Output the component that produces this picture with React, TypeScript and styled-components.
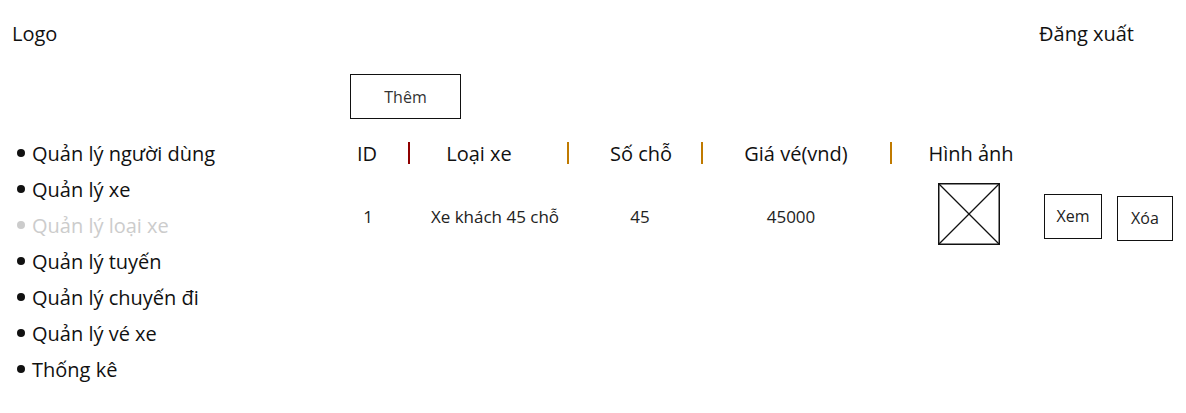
import styled, { createGlobalStyle } from 'styled-components';

const GlobalStyle = createGlobalStyle`
  body {
    margin: 0;
    background: #ffffff;
    font-family: 'Open Sans', 'Noto Sans', sans-serif;
    color: #111111;
  }
`;

const menuItems = [
  { label: 'Quản lý người dùng' },
  { label: 'Quản lý xe' },
  { label: 'Quản lý loại xe', muted: true },
  { label: 'Quản lý tuyến' },
  { label: 'Quản lý chuyến đi' },
  { label: 'Quản lý vé xe' },
  { label: 'Thống kê' },
];

function App() {
  return (
    <>
      <GlobalStyle />
      <Page>
        <TopBar>
          <span>Logo</span>
          <span>Đăng xuất</span>
        </TopBar>

        <Body>
          <Sidebar>
            {menuItems.map((item) => (
              <MenuItem key={item.label} $muted={item.muted}>
                {item.label}
              </MenuItem>
            ))}
          </Sidebar>

          <Content>
            <AddButton>Thêm</AddButton>

            <HeaderRow>
              <HeadCell $w={34}>ID</HeadCell>
              <Separator $ml={24} $color='#8f0000' />
              <HeadCell $w={138}>Loại xe</HeadCell>
              <Separator $ml={19} $color='#c07a00' />
              <HeadCell $w={120} $ml={12}>
                Số chỗ
              </HeadCell>
              <Separator $color='#c07a00' />
              <HeadCell $w={186}>Giá vé(vnd)</HeadCell>
              <Separator $ml={1} $color='#c07a00' />
              <HeadCell $w={158}>Hình ảnh</HeadCell>
            </HeaderRow>

            <DataRow>
              <DataCell $w={36}>1</DataCell>
              <DataCell $w={170} $ml={24}>
                Xe khách 45 chỗ
              </DataCell>
              <DataCell $w={120}>45</DataCell>
              <DataCell $w={182}>45000</DataCell>
              <ImageBox>
                <svg width='62' height='62' viewBox='0 0 62 62'>
                  <rect
                    x='0.75'
                    y='0.75'
                    width='60.5'
                    height='60.5'
                    fill='#fff'
                    stroke='#111'
                    strokeWidth='1.5'
                  />
                  <line x1='1' y1='1' x2='61' y2='61' stroke='#111' strokeWidth='1.2' />
                  <line x1='61' y1='1' x2='1' y2='61' stroke='#111' strokeWidth='1.2' />
                </svg>
              </ImageBox>
              <ActionButton $w={58} $ml={44}>
                Xem
              </ActionButton>
              <ActionButton $w={56} $ml={15} $dy={4}>
                Xóa
              </ActionButton>
            </DataRow>
          </Content>
        </Body>
      </Page>
    </>
  );
}

export default App;

const Page = styled.div`
  width: 1186px;
  height: 413px;
  overflow: hidden;
`;

const TopBar = styled.header`
  display: flex;
  justify-content: space-between;
  align-items: center;
  height: 68px;
  padding: 0 52px 2px 12px;
  box-sizing: border-box;
  font-size: 20px;
  color: #111;
`;

const Body = styled.div`
  display: flex;
`;

const Sidebar = styled.ul`
  width: 350px;
  margin: 67px 0 0;
  padding: 0 0 0 17px;
  box-sizing: border-box;
  list-style: none;
`;

const MenuItem = styled.li<{ $muted?: boolean }>`
  display: flex;
  align-items: center;
  height: 36px;
  font-size: 20px;
  color: ${(p) => (p.$muted ? '#cccccc' : '#111111')};
  &::before {
    content: '';
    width: 8px;
    height: 8px;
    border-radius: 50%;
    background: ${(p) => (p.$muted ? '#cccccc' : '#111111')};
    margin-right: 7px;
  }
`;

const Content = styled.div`
  display: flex;
  flex-direction: column;
  align-items: flex-start;
`;

const AddButton = styled.button`
  margin-top: 6px;
  width: 111px;
  height: 45px;
  background: #fff;
  border: 1px solid #111;
  font-family: inherit;
  font-size: 16px;
  color: #333;
  padding: 0;
`;

const HeaderRow = styled.div`
  display: flex;
  align-items: center;
  height: 36px;
  margin-top: 16px;
`;

const HeadCell = styled.div<{ $w: number; $ml?: number }>`
  width: ${(p) => p.$w}px;
  margin-left: ${(p) => p.$ml ?? 0}px;
  text-align: center;
  font-size: 20px;
  color: #111;
`;

const Separator = styled.span<{ $ml?: number; $color: string }>`
  width: 2px;
  height: 22px;
  margin-left: ${(p) => p.$ml ?? 0}px;
  background: ${(p) => p.$color};
`;

const DataRow = styled.div`
  display: flex;
  align-items: center;
  margin-top: 12px;
  height: 62px;
`;

const DataCell = styled.div<{ $w: number; $ml?: number }>`
  width: ${(p) => p.$w}px;
  margin-left: ${(p) => p.$ml ?? 0}px;
  margin-top: 5px;
  text-align: center;
  font-size: 17px;
  color: #222;
`;

const ImageBox = styled.div`
  width: 62px;
  height: 62px;
  margin-left: 56px;
  svg {
    display: block;
  }
`;

const ActionButton = styled.button<{ $w: number; $ml: number; $dy?: number }>`
  width: ${(p) => p.$w}px;
  height: 45px;
  margin-left: ${(p) => p.$ml}px;
  margin-top: ${(p) => (p.$dy ?? 0) + 4}px;
  padding: 0;
  background: #fff;
  border: 1px solid #111;
  font-family: inherit;
  font-size: 16px;
  color: #222;
`;
